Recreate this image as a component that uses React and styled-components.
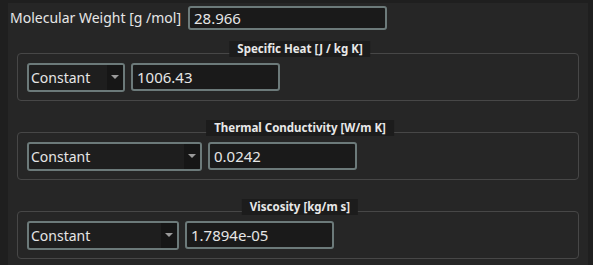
import React from 'react'
import styled, { createGlobalStyle } from 'styled-components'

const GlobalStyle = createGlobalStyle`
  html, body {
    margin: 0;
    padding: 0;
    background: #1f1f1f;
    font-family: "Noto Sans", "Open Sans", sans-serif;
    color: #e2e2e2;
  }
`

const props = [
  { title: 'Specific Heat [J / kg K]', value: '1006.43', combo: 98 },
  { title: 'Thermal Conductivity [W/m K]', value: '0.0242', combo: 175 },
  { title: 'Viscosity [kg/m s]', value: '1.7894e-05', combo: 152 }
]

const App = () => {
  return (
    <>
      <GlobalStyle />
      <Panel>
        <TopRow>
          <Label>Molecular Weight [g /mol]</Label>
          <Field $width={199} $height={24} defaultValue="28.966" />
        </TopRow>
        <Groups>
          {props.map((p) => (
            <Group key={p.title}>
              <Legend>{p.title}</Legend>
              <Combo $width={p.combo}>
                <ComboText>Constant</ComboText>
                <DropButton>
                  <Arrow />
                </DropButton>
              </Combo>
              <Field $width={149} $height={28} defaultValue={p.value} />
            </Group>
          ))}
        </Groups>
      </Panel>
    </>
  )
}

export default App

const Panel = styled.div`
  margin: 3px 0 0 8px;
  width: 580px;
  height: 262px;
  background: #262626;
  box-sizing: border-box;
  padding: 3px 9px 0 2px;
  display: flex;
  flex-direction: column;
`

const TopRow = styled.div`
  display: flex;
  align-items: center;
  gap: 7px;
  height: 24px;
`

const Label = styled.span`
  font-size: 14px;
  line-height: 24px;
  color: #e6e6e6;
  white-space: nowrap;
`

const Field = styled.input`
  box-sizing: border-box;
  width: ${(p) => p.$width}px;
  height: ${(p) => p.$height}px;
  background: #1a1a1a;
  border: 2px solid #6c7a7a;
  border-radius: 3px;
  color: #e6e6e6;
  font-family: inherit;
  font-size: 15px;
  padding: 0 0 0 4px;
  outline: none;
`

const Groups = styled.div`
  margin: 23px 0 0 7px;
  display: flex;
  flex-direction: column;
  gap: 31px;
`

const Group = styled.div`
  position: relative;
  box-sizing: border-box;
  height: 48px;
  border: 1px solid #474747;
  border-radius: 4px;
  display: flex;
  align-items: center;
  gap: 6px;
  padding: 0 0 0 9px;
`

const Legend = styled.div`
  position: absolute;
  top: -13px;
  left: 50%;
  transform: translateX(-50%);
  margin-left: 2px;
  background: #1c1c1c;
  padding: 0 8px;
  height: 16px;
  line-height: 16px;
  font-size: 11.5px;
  font-weight: bold;
  color: #e8e8e8;
  white-space: nowrap;
`

const Combo = styled.div`
  box-sizing: border-box;
  width: ${(p) => p.$width}px;
  height: 29px;
  background: #1e1e1e;
  border: 2px solid #6c7a7a;
  border-radius: 3px;
  display: flex;
  align-items: stretch;
  overflow: hidden;
`

const ComboText = styled.span`
  flex: 1;
  font-size: 14px;
  line-height: 25px;
  padding-left: 2px;
  color: #e6e6e6;
`

const DropButton = styled.span`
  width: 16px;
  background: #161616;
  display: flex;
  align-items: center;
  justify-content: center;
`

const Arrow = styled.span`
  width: 0;
  height: 0;
  border-left: 4px solid transparent;
  border-right: 4px solid transparent;
  border-top: 4px solid #9a9a9a;
`
